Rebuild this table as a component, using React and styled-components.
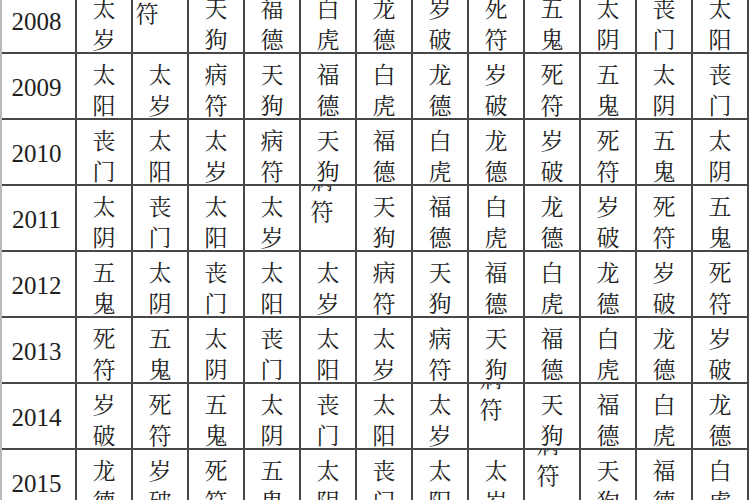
import React from "react";
import styled, { createGlobalStyle, css } from "styled-components";

const Global = createGlobalStyle`
  html, body { margin: 0; padding: 0; background: #ffffff; overflow: hidden; }
  #root { width: 750px; height: 500px; overflow: hidden; }
`;

const SPIRITS = ["太岁", "太阳", "丧门", "太阴", "五鬼", "死符", "岁破", "龙德", "白虎", "福德", "天狗", "病符"];
const YEARS = [2008, 2009, 2010, 2011, 2012, 2013, 2014, 2015];
// cells whose text was printed displaced upward (the top character is cut by the rule)
const LIFTED = { "2008-1": -13, "2011-4": -6, "2014-7": -5, "2015-8": -4 };

const Page = styled.div`
  width: 750px;
  height: 500px;
  overflow: hidden;
  background: #ffffff;
`;

const Grid = styled.div`
  margin-top: -14px;
  display: grid;
  grid-template-columns: 73px repeat(12, 54px);
  grid-auto-rows: 64px;
  gap: 2px;
  width: max-content;
  padding: 2px 2px 2px 0;
  border-left: 2px solid #b9b9b9;
  background: #474747;
`;

const YearCell = styled.div`
  background: #ffffff;
  display: flex;
  align-items: center;
  justify-content: center;
  padding: 3px 4px 0 0;
  font-family: "Liberation Serif", "DejaVu Serif", serif;
  font-size: 25px;
  color: #1e1e1e;
`;

const NameCell = styled.div`
  background: #ffffff;
  display: flex;
  justify-content: center;
  align-items: flex-start;
  padding-top: 4px;
  box-sizing: border-box;
  ${(p) => p.$clip && css`overflow: hidden;`}
`;

const Stack = styled.div`
  display: flex;
  flex-direction: column;
  align-items: center;
  font-family: "Noto Serif CJK SC", "Noto Sans CJK SC", serif;
  font-size: 23px;
  line-height: 31px;
  color: #222222;
  ${(p) =>
    p.$lift &&
    css`
      margin-top: -26px;
      transform: translateX(${p.$dx}px);
    `}
`;

const Char = styled.span`
  display: block;
`;

function Name({ text, dx }) {
  const lifted = dx !== undefined;
  return (
    <NameCell $clip={lifted}>
      <Stack $lift={lifted} $dx={dx}>
        {text.split("").map((ch, i) => (
          <Char key={i}>{ch}</Char>
        ))}
      </Stack>
    </NameCell>
  );
}

export default function App() {
  return (
    <Page>
      <Global />
      <Grid>
        {YEARS.map((year, r) => (
          <React.Fragment key={year}>
            <YearCell>{year}</YearCell>
            {Array.from({ length: 12 }, (_, c) => (
              <Name
                key={c}
                text={SPIRITS[(((r - c) % 12) + 12) % 12]}
                dx={LIFTED[`${year}-${c}`]}
              />
            ))}
          </React.Fragment>
        ))}
      </Grid>
    </Page>
  );
}
